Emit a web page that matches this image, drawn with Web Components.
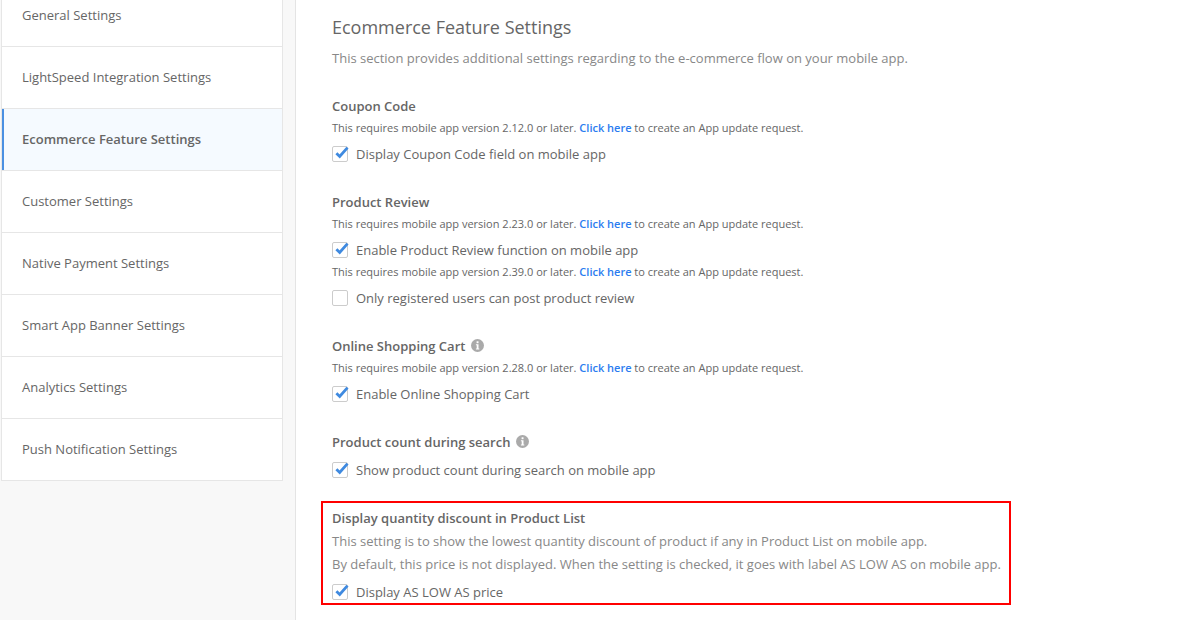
<!DOCTYPE html>
<html>
<head>
<meta charset="utf-8">
<style>
  html, body { margin: 0; height: 620px; overflow: hidden; background: #fff; }
  body { font-family: "Open Sans", sans-serif; color: #666; display: flex; }
</style>
</head>
<body>
<settings-sidebar>
  <menu-row>General Settings</menu-row>
  <menu-row>LightSpeed Integration Settings</menu-row>
  <menu-row active>Ecommerce Feature Settings</menu-row>
  <menu-row>Customer Settings</menu-row>
  <menu-row>Native Payment Settings</menu-row>
  <menu-row>Smart App Banner Settings</menu-row>
  <menu-row>Analytics Settings</menu-row>
  <menu-row>Push Notification Settings</menu-row>
</settings-sidebar>

<settings-main>
  <setting-group heading="Coupon Code">
    <version-note version="2.12.0"></version-note>
    <check-row checked>Display Coupon Code field on mobile app</check-row>
  </setting-group>
  <setting-group heading="Product Review">
    <version-note version="2.23.0"></version-note>
    <check-row checked>Enable Product Review function on mobile app</check-row>
    <version-note version="2.39.0" tight></version-note>
    <check-row>Only registered users can post product review</check-row>
  </setting-group>
  <setting-group heading="Online Shopping Cart" info>
    <version-note version="2.28.0"></version-note>
    <check-row checked>Enable Online Shopping Cart</check-row>
  </setting-group>
  <setting-group heading="Product count during search" info>
    <check-row checked spaced>Show product count during search on mobile app</check-row>
  </setting-group>
  <highlight-box heading="Display quantity discount in Product List">
    <div>This setting is to show the lowest quantity discount of product if any in Product List on mobile app.</div>
    <div>By default, this price is not displayed. When the setting is checked, it goes with label AS LOW AS on mobile app.</div>
    <check-row checked slot="check">Display AS LOW AS price</check-row>
  </highlight-box>
</settings-main>

<script>
function define(name, html, init) {
  customElements.define(name, class extends HTMLElement {
    connectedCallback() {
      if (this.shadowRoot) return
      const root = this.attachShadow({mode: "open"})
      root.innerHTML = html
      if (init) init(this, root)
    }
  })
}

define("settings-sidebar", `
  <style>
    :host {
      display: block;
      box-sizing: border-box;
      flex: none;
      width: 296px;
      height: 620px;
      background: #f8f8f8;
      border-right: 1px solid #e4e4e4;
      padding-left: 1px;
      overflow: hidden;
    }
    #list {
      width: 282px;
      box-sizing: border-box;
      margin-top: -15px;
      background: #fff;
      border: 1px solid #e6e6e6;
      border-top: 0;
    }
  </style>
  <div id="list"><slot></slot></div>
`)

define("menu-row", `
  <style>
    :host {
      display: flex;
      align-items: center;
      box-sizing: border-box;
      height: 62px;
      padding: 0 0 1px 20px;
      border-bottom: 1px solid #e6e6e6;
      font-size: 13px;
      color: #666;
    }
    :host(:last-child) { border-bottom: 0; height: 61px; }
    :host([active]) {
      background: #f5faff;
      font-weight: 600;
      box-shadow: inset 2px 0 0 #4a90e2;
    }
  </style>
  <slot></slot>
`)

define("settings-main", `
  <style>
    :host {
      display: block;
      flex: 1;
      padding: 15px 0 0 36px;
      min-width: 0;
    }
    h1 {
      margin: 0;
      font-size: 18px;
      font-weight: 400;
      line-height: 24px;
      color: #666;
    }
    p {
      margin: 9px 0 28px;
      font-size: 13px;
      line-height: 20px;
      color: #888;
    }
  </style>
  <h1>Ecommerce Feature Settings</h1>
  <p>This section provides additional settings regarding to the e-commerce flow on your mobile app.</p>
  <slot></slot>
`)

define("setting-group", `
  <style>
    :host { display: block; margin-bottom: 26px; }
    #head {
      display: flex;
      align-items: center;
      gap: 6px;
      height: 20px;
      font-size: 13px;
      font-weight: 600;
      color: #666;
    }
    svg { display: none; margin-top: -2px; }
    :host([info]) svg { display: block; }
  </style>
  <div id="head"><span id="title"></span>
    <svg width="13" height="13" viewBox="0 0 13 13"><circle cx="6.5" cy="6.5" r="6.5" fill="#aaa"/><rect x="5.6" y="2.3" width="1.9" height="1.9" fill="#fff"/><path d="M4.9 5.3h2.6v4.1h.8v1H4.9v-1h.8V6.3h-.8z" fill="#fff"/></svg>
  </div>
  <slot></slot>
`, (el, root) => {
  root.getElementById("title").textContent = el.getAttribute("heading")
})

define("version-note", `
  <style>
    :host {
      display: block;
      height: 24px;
      line-height: 24px;
      font-size: 11px;
      color: #666;
      white-space: nowrap;
    }
    :host([tight]) { margin-top: -2px; }
    b { font-weight: 600; color: #2b7cf0; }
  </style>
  This requires mobile app version <span id="v"></span> or later. <b>Click here</b> to create an App update request.
`, (el, root) => {
  root.getElementById("v").textContent = el.getAttribute("version")
})

define("check-row", `
  <style>
    :host {
      display: flex;
      align-items: center;
      gap: 8px;
      height: 24px;
      margin-top: 2px;
      font-size: 13px;
      color: #666;
    }
    :host([spaced]) { margin-top: 6px; }
    #box {
      position: relative;
      box-sizing: border-box;
      flex: none;
      width: 16px;
      height: 16px;
      background: #fff;
      border: 1px solid #ccc;
      border-radius: 2px;
    }
    svg { position: absolute; left: 0; top: -2px; display: none; overflow: visible; }
    :host([checked]) svg { display: block; }
  </style>
  <span id="box"><svg width="16" height="16" viewBox="0 0 16 16"><path d="M3.4 8.2l3.3 3.3 7.8-8.9" fill="none" stroke="#3f8ae0" stroke-width="2.8"/></svg></span>
  <span><slot></slot></span>
`)

define("highlight-box", `
  <style>
    :host {
      display: block;
      box-sizing: border-box;
      width: 690px;
      height: 104px;
      margin: -7px 0 0 -11px;
      padding: 5px 9px 0;
      border: 2px solid #f00;
    }
    #head { height: 20px; line-height: 20px; font-size: 13px; font-weight: 600; color: #666; white-space: nowrap; }
    #lines { font-size: 13px; line-height: 23px; color: #888; margin-top: 2px; white-space: nowrap; }
    #check { margin-top: 4px; }
  </style>
  <div id="head"></div>
  <div id="lines"><slot></slot></div>
  <div id="check"><slot name="check"></slot></div>
`, (el, root) => {
  root.getElementById("head").textContent = el.getAttribute("heading")
})
</script>
</body>
</html>
